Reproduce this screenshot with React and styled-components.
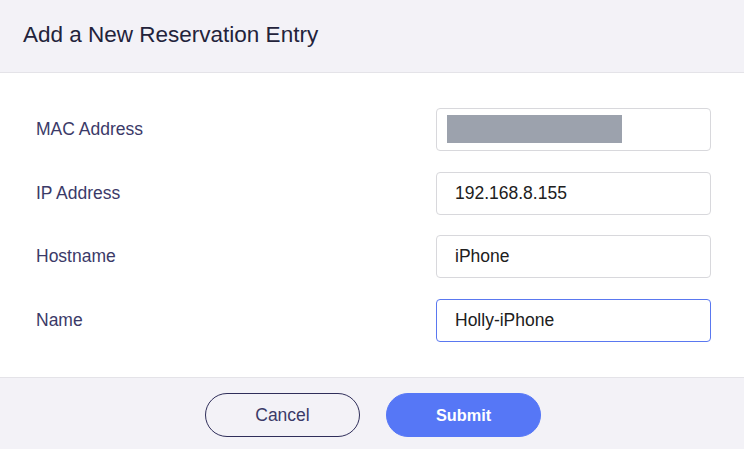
import React, { useState } from 'react'
import styled, { createGlobalStyle } from 'styled-components'

const GlobalStyle = createGlobalStyle`
  * { box-sizing: border-box; }
  body {
    margin: 0;
    font-family: "Liberation Sans", Arial, sans-serif;
    background: #ffffff;
  }
`

const App = () => {
    const [ip, setIp] = useState('192.168.8.155')
    const [hostname, setHostname] = useState('iPhone')
    const [name, setName] = useState('Holly-iPhone')

    return (
        <>
            <GlobalStyle />
            <Dialog>
                <Header>
                    <Title>Add a New Reservation Entry</Title>
                </Header>
                <Body>
                    <Row>
                        <Label>MAC Address</Label>
                        <InputBox>
                            <Redacted />
                        </InputBox>
                    </Row>
                    <Row>
                        <Label>IP Address</Label>
                        <InputField value={ip} onChange={(e) => setIp(e.target.value)} />
                    </Row>
                    <Row>
                        <Label>Hostname</Label>
                        <InputField value={hostname} onChange={(e) => setHostname(e.target.value)} />
                    </Row>
                    <Row>
                        <Label>Name</Label>
                        <InputField $focused value={name} onChange={(e) => setName(e.target.value)} />
                    </Row>
                </Body>
                <Footer>
                    <Button>Cancel</Button>
                    <Button $primary>Submit</Button>
                </Footer>
            </Dialog>
        </>
    )
}

export default App

const Dialog = styled.div`
display: flex;
flex-direction: column;
width: 744px;
height: 449px;
background: #fff;
`
const Header = styled.div`
display: flex;
align-items: center;
height: 73px;
padding: 0 23px 2px;
background: #f3f2f7;
border-bottom: 1px solid #e4e3e8;
`
const Title = styled.h1`
margin: 0;
font-size: 22.5px;
font-weight: normal;
color: #23233b;
`
const Body = styled.div`
display: flex;
flex-direction: column;
gap: 20.7px;
padding: 35px 33px 35px 36px;
flex: 1;
`
const Row = styled.div`
display: flex;
align-items: center;
justify-content: space-between;
height: 43px;
`
const Label = styled.span`
font-size: 17.5px;
color: #3b3a68;
`
const InputBox = styled.div`
display: flex;
align-items: center;
width: 275px;
height: 43px;
padding: 0 10px;
border: 1px solid #d8d8dc;
border-radius: 4px;
background: #fff;
`
const Redacted = styled.div`
width: 175px;
height: 28px;
background: #9ca2ad;
`
const InputField = styled.input`
width: 275px;
height: 43px;
padding: 0 18px;
font-family: inherit;
font-size: 17.5px;
color: #202020;
border: 1px solid ${({ $focused }) => ($focused ? '#5a78f0' : '#d8d8dc')};
border-radius: 4px;
background: #fff;
outline: none;
`
const Footer = styled.div`
display: flex;
justify-content: center;
gap: 26px;
height: 72px;
padding: 15px 0 0 2px;
background: #f3f2f7;
border-top: 1px solid #e4e3e8;
`
const Button = styled.button`
width: 155px;
height: 44px;
font-family: inherit;
font-size: ${({ $primary }) => ($primary ? '16.3px' : '17.5px')};
font-weight: ${({ $primary }) => ($primary ? 'bold' : 'normal')};
color: ${({ $primary }) => ($primary ? '#fff' : '#3b3a68')};
background: ${({ $primary }) => ($primary ? '#5677f6' : 'transparent')};
border: 1px solid ${({ $primary }) => ($primary ? '#5677f6' : '#2f2e5a')};
border-radius: 22px;
cursor: pointer;
`
